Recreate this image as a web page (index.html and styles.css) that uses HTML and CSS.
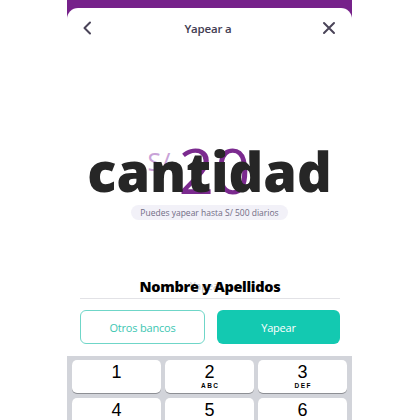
FILE: index.html
```html
<!DOCTYPE html>
<html lang="es">
<head>
<meta charset="utf-8">
<link rel="stylesheet" href="styles.css">
</head>
<body>
<div class="phone">
  <div class="card">
    <header class="topbar">
      <svg class="icon" width="12" height="14" viewBox="0 0 12 14"><path d="M8 1.5 L2.5 7 L8 12.5" fill="none" stroke="#4a4458" stroke-width="2" stroke-linecap="round" stroke-linejoin="round"/></svg>
      <span class="title">Yapear a</span>
      <svg class="icon" width="14" height="14" viewBox="0 0 14 14"><path d="M2 2 L12 12 M12 2 L2 12" fill="none" stroke="#4a4458" stroke-width="2" stroke-linecap="round"/></svg>
    </header>
    <section class="amount-area">
      <div class="amount"><span class="currency">S/</span><span class="value">20</span></div>
      <div class="cantidad">cantidad</div>
      <div class="pill">Puedes yapear hasta S/ 500 diarios</div>
    </section>
    <section class="name-field">
      <span class="placeholder">Yapear</span>
      <span class="name-label">Nombre y Apellidos</span>
    </section>
    <div class="actions">
      <button class="btn btn-outline">Otros bancos</button>
      <button class="btn btn-fill">Yapear</button>
    </div>
    <div class="keyboard">
      <div class="key"><span class="num">1</span></div>
      <div class="key"><span class="num">2</span><span class="letters">ABC</span></div>
      <div class="key"><span class="num">3</span><span class="letters">DEF</span></div>
      <div class="key"><span class="num">4</span></div>
      <div class="key"><span class="num">5</span></div>
      <div class="key"><span class="num">6</span></div>
    </div>
  </div>
</div>
</body>
</html>
```
FILE: styles.css
```css
html, body {
  margin: 0;
  padding: 0;
  background: #ffffff;
}
body {
  width: 420px;
  height: 420px;
  overflow: hidden;
  font-family: "Open Sans", "Liberation Sans", sans-serif;
}
.phone {
  width: 285px;
  height: 420px;
  margin-left: 67px;
  background: #76228a;
  padding-top: 8px;
  box-sizing: border-box;
  overflow: hidden;
}
.card {
  background: #ffffff;
  border-radius: 11px 11px 0 0;
  height: 412px;
  display: flex;
  flex-direction: column;
}
.card > * {
  flex-shrink: 0;
}
.topbar {
  height: 40px;
  display: flex;
  align-items: center;
  justify-content: space-between;
  padding: 0 16px 0 15px;
}
.title {
  font-size: 11.5px;
  font-weight: 600;
  color: #433d52;
  letter-spacing: -0.2px;
}
.amount-area {
  position: relative;
  display: flex;
  flex-direction: column;
  align-items: center;
  padding-top: 99px;
  height: 175px;
  box-sizing: border-box;
}
.amount {
  display: flex;
  align-items: flex-start;
  margin-right: 20px;
  line-height: 1;
  height: 56px;
}
.currency {
  font-size: 25px;
  font-weight: 400;
  color: #c9a3d8;
  margin-top: 2px;
  margin-right: 8px;
}
.value {
  font-size: 62px;
  font-weight: 400;
  color: #7b2a8f;
  margin-top: -8px;
  letter-spacing: 1px;
}
.cantidad {
  position: absolute;
  left: 0;
  right: 0;
  top: 96px;
  text-align: center;
  font-size: 54px;
  font-weight: 800;
  color: #262626;
  letter-spacing: 0;
  line-height: 1;
}
.pill {
  margin-top: 2px;
  background: #f2f1f8;
  color: #716c84;
  font-size: 8.5px;
  height: 15px;
  line-height: 15px;
  padding: 0 9px;
  border-radius: 8px;
}
.name-field {
  position: relative;
  margin: 53px 12px 0 13px;
  height: 22px;
  border-bottom: 1px solid #e2e2e6;
  display: flex;
  justify-content: center;
  align-items: center;
}
.placeholder {
  position: absolute;
  left: 110px;
  top: 3px;
  font-size: 10px;
  color: #c4c4c8;
}
.name-label {
  position: relative;
  font-size: 14.5px;
  font-weight: 800;
  color: #000000;
  letter-spacing: -0.3px;
  margin-top: -2px;
}
.actions {
  display: flex;
  gap: 12px;
  margin: 11px 12px 0 13px;
}
.btn {
  flex: 1;
  height: 34px;
  border-radius: 6px;
  font-family: "Open Sans", "Liberation Sans", sans-serif;
  font-size: 11px;
  letter-spacing: -0.2px;
}
.btn-outline {
  background: #ffffff;
  border: 1px solid #6fd6c8;
  color: #3cc6b2;
}
.btn-fill {
  background: #13c9b1;
  border: none;
  color: #ffffff;
}
.keyboard {
  margin-top: 12px;
  flex: 1 0 auto;
  background: #d2d4da;
  padding: 4px 5px 0 5px;
  display: grid;
  grid-template-columns: repeat(3, 1fr);
  grid-auto-rows: 33px;
  gap: 5px 4px;
  align-content: start;
}
.key {
  background: #ffffff;
  border-radius: 5px;
  box-shadow: 0 1px 0 #8d8f94;
  display: flex;
  flex-direction: column;
  align-items: center;
  justify-content: flex-start;
  font-family: "Liberation Sans", Arial, sans-serif;
  color: #000000;
}
.num {
  font-size: 18px;
  line-height: 20px;
  margin-top: 2px;
}
.letters {
  font-size: 6.5px;
  font-weight: 700;
  letter-spacing: 1.5px;
  line-height: 8px;
  margin-left: 1.5px;
}
```
